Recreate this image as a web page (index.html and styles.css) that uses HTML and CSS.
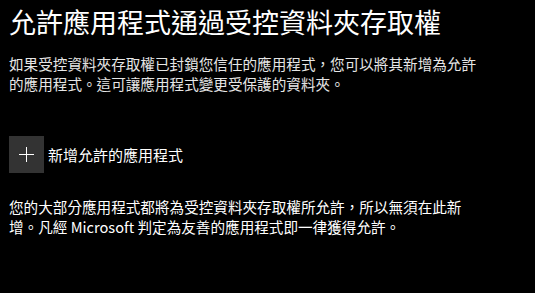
FILE: index.html
```html
<!DOCTYPE html>
<html lang="zh-Hant">
<head>
<meta charset="utf-8">
<link rel="stylesheet" href="styles.css">
</head>
<body>
<main class="page">
  <h1 class="title">允許應用程式通過受控資料夾存取權</h1>
  <p class="desc">如果受控資料夾存取權已封鎖您信任的應用程式，您可以將其新增為允許的應用程式。這可讓應用程式變更受保護的資料夾。</p>
  <button class="add-btn" type="button">
    <span class="add-icon">
      <svg width="15" height="15" viewBox="0 0 15 15"><path d="M7.5 0V15M0 7.5H15" stroke="#fff" stroke-width="1" fill="none"/></svg>
    </span>
    <span class="add-label">新增允許的應用程式</span>
  </button>
  <p class="note">您的大部分應用程式都將為受控資料夾存取權所允許，所以無須在此新增。凡經 Microsoft 判定為友善的應用程式即一律獲得允許。</p>
</main>
</body>
</html>
```

FILE: styles.css
```css
html, body {
  margin: 0;
  padding: 0;
  background: #000;
}
body {
  font-family: "Noto Sans CJK TC", "Noto Sans", sans-serif;
  color: #fff;
}
.page {
  padding: 4px 0 0 9px;
  width: 480px;
  display: flex;
  flex-direction: column;
  align-items: flex-start;
}
.title {
  margin: 0;
  font-size: 27px;
  font-weight: 400;
  line-height: 36px;
  color: #fff;
}
.desc {
  margin: 14px 0 0 0;
  font-size: 14.6px;
  line-height: 20px;
  color: #e6e6e6;
}
.add-btn {
  margin-top: 42px;
  display: flex;
  align-items: center;
  gap: 4px;
  padding: 0;
  border: 0;
  background: none;
  color: #fff;
  font-family: inherit;
  cursor: pointer;
}
.add-icon {
  width: 35px;
  height: 37px;
  background: #333;
  display: flex;
  align-items: center;
  justify-content: center;
}
.add-label {
  font-size: 15px;
  line-height: 20px;
}
.note {
  margin: 24px 0 0 0;
  font-size: 14.6px;
  line-height: 20px;
  color: #fff;
}
```
